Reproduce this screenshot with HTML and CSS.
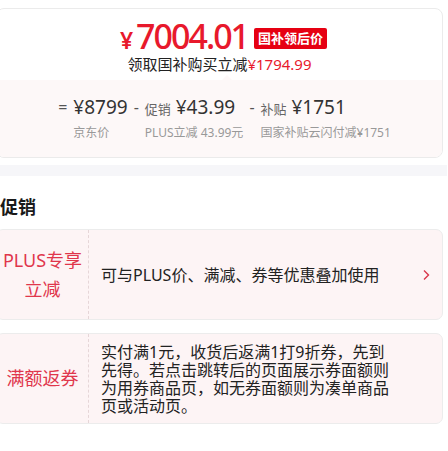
FILE: index.html
```html
<!DOCTYPE html>
<html lang="zh-CN">
<head>
    <meta charset="UTF-8">
    <meta name="viewport" content="width=device-width, initial-scale=1.0">
    <title>促销</title>
    <link rel="stylesheet" href="styles.css">
</head>
<body>
    <div class="page">
        <div class="price-card">
            <div class="price-top">
                <div class="price-line">
                    <span class="yen">¥</span><span class="amount">7004.01</span>
                    <span class="badge">国补领后价</span>
                </div>
                <div class="price-sub">领取国补购买立减<span class="red">¥1794.99</span></div>
            </div>
            <div class="price-bottom">
                <div class="calc">
                    <span class="op">=</span>
                    <span class="val">¥8799</span>
                    <span class="op">-</span>
                    <span class="val"><small>促销</small> ¥43.99</span>
                    <span class="op">-</span>
                    <span class="val"><small>补贴</small> ¥1751</span>

                    <span></span>
                    <span class="label">京东价</span>
                    <span></span>
                    <span class="label">PLUS立减 43.99元</span>
                    <span></span>
                    <span class="label">国家补贴云闪付减¥1751</span>
                </div>
            </div>
        </div>

        <div class="band"></div>

        <h2 class="section-title">促销</h2>

        <div class="promo">
            <div class="promo-tag">PLUS专享<br>立减</div>
            <div class="promo-text">可与PLUS价、满减、券等优惠叠加使用</div>
            <svg class="chevron" width="8" height="12" viewBox="0 0 8 12">
                <path d="M2 1.5 L6.5 6 L2 10.5" fill="none" stroke="#d9364b" stroke-width="1.4"/>
            </svg>
        </div>

        <div class="promo">
            <div class="promo-tag">满额返券</div>
            <div class="promo-text multi">实付满1元，收货后返满1打9折券，先到先得。若点击跳转后的页面展示券面额则为用券商品页，如无券面额则为凑单商品页或活动页。</div>
        </div>
    </div>
</body>
</html>
```

FILE: styles.css
```css
body {
    margin: 0;
    background-color: white;
    font-family: "Noto Sans", "Noto Sans CJK SC", sans-serif;
    color: #333;
    overflow: hidden;
}

.page {
    width: 447px;
    margin-left: -4px;
    padding-top: 8px;
}

.price-card {
    border: 1px solid #ebebeb;
    border-radius: 8px;
    overflow: hidden;
}

.price-top {
    height: 71px;
    text-align: center;
    position: relative;
}

.price-top::after {
    content: "";
    position: absolute;
    left: 225px;
    bottom: 0;
    border: 5px solid transparent;
    border-bottom-color: #fdf8f8;
}

.price-line {
    display: flex;
    justify-content: center;
    align-items: baseline;
    height: 34px;
    line-height: 34px;
    padding-top: 10px;
    padding-left: 8px;
    color: #e8192c;
}

.yen {
    font-size: 23px;
    font-weight: 600;
    margin-right: 3px;
}

.amount {
    font-size: 34px;
    font-weight: 500;
    letter-spacing: -2px;
}

.badge {
    align-self: center;
    background-color: #e60012;
    color: white;
    font-size: 13px;
    font-weight: bold;
    padding: 1px 4px;
    line-height: 19px;
    border-radius: 2px;
    margin-left: 6px;
    margin-top: 5px;
}

.price-sub {
    font-size: 15px;
    line-height: 18px;
    margin-top: 2px;
    color: #222;
}

.red {
    color: #e8192c;
}

.price-bottom {
    height: 77px;
    background-color: #fdf8f8;
    display: flex;
    justify-content: center;
}

.calc {
    display: grid;
    grid-template-columns: auto auto auto auto auto auto;
    column-gap: 6px;
    row-gap: 2px;
    margin-top: 14px;
    margin-left: 10px;
    align-content: start;
}

.op {
    font-size: 16px;
    color: #555;
    line-height: 26px;
}

.val {
    font-size: 19px;
    line-height: 26px;
    color: #333;
}

.val small {
    font-size: 13px;
    color: #666;
}

.label {
    font-size: 12px;
    line-height: 18px;
    color: #999;
}

.band {
    height: 11px;
    margin: 7px -4px 0 0;
    background-color: #f6f6f9;
}

.section-title {
    margin: 19px 0 10px 4px;
    font-size: 18px;
    line-height: 24px;
    font-weight: bold;
    color: #1a1a1a;
}

.promo {
    display: flex;
    align-items: center;
    min-height: 89px;
    background-color: #fdf4f5;
    border: 1px solid #ececec;
    border-radius: 7px;
    margin-bottom: 13px;
    position: relative;
}

.promo-tag {
    width: 91px;
    align-self: stretch;
    display: flex;
    align-items: center;
    justify-content: center;
    text-align: center;
    font-size: 18px;
    line-height: 29px;
    color: #e0364c;
    border-right: 1px dashed #e6d6d8;
    flex-shrink: 0;
}

.promo-text {
    font-size: 16px;
    line-height: 18px;
    color: #222;
    padding-left: 12px;
    flex: 1;
}

.promo-text.multi {
    padding: 7px 52px 7px 12px;
}

.chevron {
    margin-right: 12px;
}
```
